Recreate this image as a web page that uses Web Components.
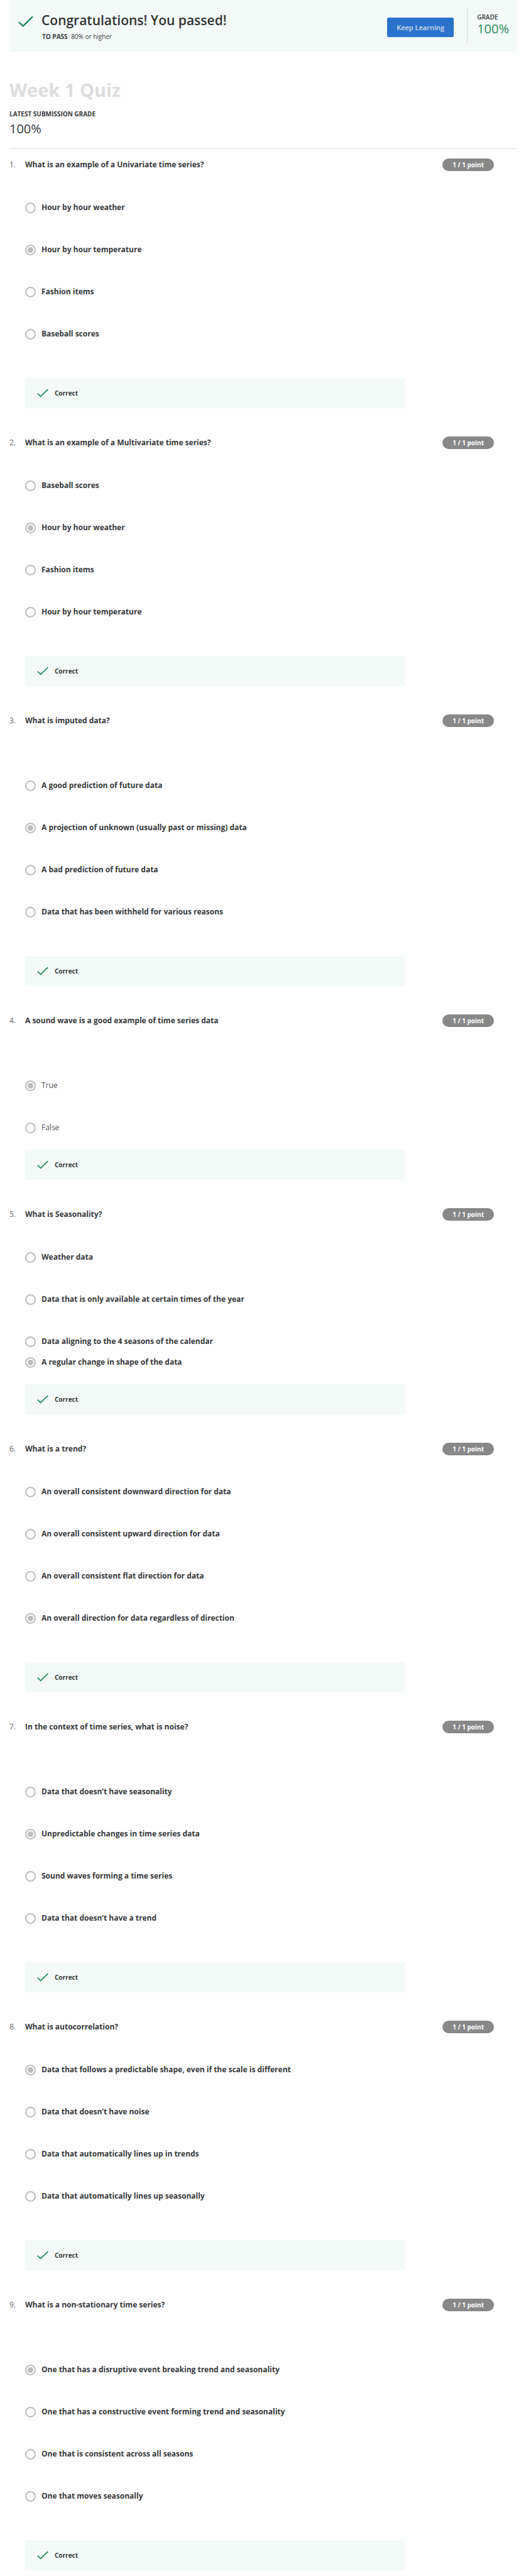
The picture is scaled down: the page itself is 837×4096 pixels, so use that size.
<!DOCTYPE html>
<html lang="en">
<head>
<meta charset="utf-8">
<meta name="viewport" content="width=device-width, initial-scale=1">
<title>Week 1 Quiz</title>
<style>
  body { margin: 0; background: #fefefe; color: #373a3c; font-family: "Open Sans", "Noto Sans", sans-serif; font-size: 12px; line-height: 16px; }
</style>
</head>
<body>
<quiz-page>
  <pass-banner slot="banner" grade="100%">
    Congratulations! You passed!
    <span slot="requirement">80% or higher</span>
    <span slot="action">Keep Learning</span>
  </pass-banner>
  <quiz-heading slot="heading" grade="100%">Week 1 Quiz</quiz-heading>

  <quiz-question number="1">
    <span slot="prompt">What is an example of a Univariate time series?</span>
    <quiz-option>Hour by hour weather</quiz-option>
    <quiz-option checked>Hour by hour temperature</quiz-option>
    <quiz-option>Fashion items</quiz-option>
    <quiz-option>Baseball scores</quiz-option>
  </quiz-question>

  <quiz-question number="2">
    <span slot="prompt">What is an example of a Multivariate time series?</span>
    <quiz-option>Baseball scores</quiz-option>
    <quiz-option checked>Hour by hour weather</quiz-option>
    <quiz-option>Fashion items</quiz-option>
    <quiz-option>Hour by hour temperature</quiz-option>
  </quiz-question>

  <quiz-question number="3" spaced>
    <span slot="prompt">What is imputed data?</span>
    <quiz-option>A good prediction of future data</quiz-option>
    <quiz-option checked>A projection of unknown (usually past or missing) data</quiz-option>
    <quiz-option>A bad prediction of future data</quiz-option>
    <quiz-option>Data that has been withheld for various reasons</quiz-option>
  </quiz-question>

  <quiz-question number="4" spaced>
    <span slot="prompt">A sound wave is a good example of time series data</span>
    <quiz-option plain checked>True</quiz-option>
    <quiz-option plain after="none">False</quiz-option>
  </quiz-question>

  <quiz-question number="5">
    <span slot="prompt">What is Seasonality?</span>
    <quiz-option>Weather data</quiz-option>
    <quiz-option>Data that is only available at certain times of the year</quiz-option>
    <quiz-option after="tight">Data aligning to the 4 seasons of the calendar</quiz-option>
    <quiz-option after="none" checked>A regular change in shape of the data</quiz-option>
  </quiz-question>

  <quiz-question number="6">
    <span slot="prompt">What is a trend?</span>
    <quiz-option>An overall consistent downward direction for data</quiz-option>
    <quiz-option>An overall consistent upward direction for data</quiz-option>
    <quiz-option>An overall consistent flat direction for data</quiz-option>
    <quiz-option checked>An overall direction for data regardless of direction</quiz-option>
  </quiz-question>

  <quiz-question number="7" spaced>
    <span slot="prompt">In the context of time series, what is noise?</span>
    <quiz-option>Data that doesn’t have seasonality</quiz-option>
    <quiz-option checked>Unpredictable changes in time series data</quiz-option>
    <quiz-option>Sound waves forming a time series</quiz-option>
    <quiz-option>Data that doesn’t have a trend</quiz-option>
  </quiz-question>

  <quiz-question number="8">
    <span slot="prompt">What is autocorrelation?</span>
    <quiz-option checked>Data that follows a predictable shape, even if the scale is different</quiz-option>
    <quiz-option>Data that doesn’t have noise</quiz-option>
    <quiz-option>Data that automatically lines up in trends</quiz-option>
    <quiz-option>Data that automatically lines up seasonally</quiz-option>
  </quiz-question>

  <quiz-question number="9" spaced last>
    <span slot="prompt">What is a non-stationary time series?</span>
    <quiz-option checked>One that has a disruptive event breaking trend and seasonality</quiz-option>
    <quiz-option>One that has a constructive event forming trend and seasonality</quiz-option>
    <quiz-option>One that is consistent across all seasons</quiz-option>
    <quiz-option>One that moves seasonally</quiz-option>
  </quiz-question>
</quiz-page>

<script>
  class Component extends HTMLElement {
    connectedCallback() {
      if (this.shadowRoot) return;
      this.attachShadow({ mode: "open" }).innerHTML = this.render();
    }
  }

  customElements.define("check-icon", class extends Component {
    render() {
      return `
        <style>
          :host { display: block; flex: none; width: 18px; }
          svg { display: block; width: 100%; height: auto; }
        </style>
        <svg viewBox="0 0 24 18" aria-hidden="true">
          <path d="M1 10.2 7.7 16.4 23 1.4" fill="none" stroke="#1d8553" stroke-width="2.2"/>
        </svg>`;
    }
  });

  customElements.define("quiz-page", class extends Component {
    render() {
      return `
        <style>
          :host { display: block; padding: 0 15px 9px; }
          .questions { border-top: 1px solid #dedede; padding-top: 9px; }
        </style>
        <slot name="banner"></slot>
        <main>
          <slot name="heading"></slot>
          <div class="questions"><slot></slot></div>
        </main>`;
    }
  });

  customElements.define("pass-banner", class extends Component {
    render() {
      return `
        <style>
          :host { display: flex; align-items: flex-start; box-sizing: border-box; min-height: 83px; padding: 12px 12px 12px 14px; background: #f3faf8; }
          check-icon { width: 24px; margin: 13px 13px 0 0; }
          .text { flex: 1; padding-top: 6px; }
          h1 { margin: 0; font-size: 21px; line-height: 28px; font-weight: 600; color: #333; }
          p { margin: 4px 0 0 1px; font-size: 10px; line-height: 16px; }
          p b { font-weight: 700; }
          p span { margin-left: 3px; }
          button { height: 31px; padding: 0 15px; margin: 16px 21px 0 0; border: 0; border-radius: 2px; background: #2a73cc; color: #d9dde4; font: 600 11px/16px "Open Sans", sans-serif; }
          .grade { border-left: 1px solid #dcdfde; padding: 8px 0 0 15px; min-height: 51px; font-size: 10px; line-height: 14px; }
          .grade b { display: block; font-weight: 600; }
          .grade strong { display: block; font-size: 20px; line-height: 24px; font-weight: 400; color: #2a8a5d; }
        </style>
        <check-icon></check-icon>
        <div class="text">
          <h1><slot></slot></h1>
          <p><b>TO PASS</b> <span><slot name="requirement"></slot></span></p>
        </div>
        <button type="button"><slot name="action"></slot></button>
        <div class="grade"><b>GRADE</b><strong>${this.getAttribute("grade")}</strong></div>`;
    }
  });

  customElements.define("quiz-heading", class extends Component {
    render() {
      return `
        <style>
          :host { display: block; padding: 40px 0 19px; }
          h2 { margin: 0; font-size: 29px; line-height: 40px; font-weight: 700; color: #ddd; }
          .label { margin-top: 10px; font-size: 10px; line-height: 16px; font-weight: 700; }
          .value { margin-top: 4px; font-size: 20px; line-height: 24px; font-weight: 400; }
        </style>
        <h2><slot></slot></h2>
        <div class="label">LATEST SUBMISSION GRADE</div>
        <div class="value">${this.getAttribute("grade")}</div>`;
    }
  });

  customElements.define("points-badge", class extends Component {
    render() {
      return `
        <style>
          :host { display: block; flex: none; padding: 0 16px; border-radius: 10px; background: #888; color: #fff; font-size: 10px; line-height: 20px; font-weight: 700; }
        </style>
        <slot></slot>`;
    }
  });

  customElements.define("quiz-feedback", class extends Component {
    render() {
      return `
        <style>
          :host { display: flex; align-items: center; gap: 10px; box-sizing: border-box; width: 77.2%; height: 48px; padding: 0 19px; background: #f3faf8; font-size: 10px; font-weight: 700; }
        </style>
        <check-icon></check-icon>
        <slot></slot>`;
    }
  });

  customElements.define("quiz-option", class extends Component {
    render() {
      return `
        <style>
          :host { display: block; padding-bottom: 35px; font-weight: 700; }
          :host([after="tight"]) { padding-bottom: 1px; }
          :host([after="none"]) { padding-bottom: 0; }
          :host([plain]) { font-weight: 400; color: #555; }
          label { display: flex; align-items: center; gap: 9px; min-height: 32px; }
          input { appearance: none; flex: none; display: grid; place-items: center; box-sizing: border-box; width: 17px; height: 17px; margin: 0; border: 2px solid #bdbdbd; border-radius: 50%; }
          input:checked::before { content: ""; width: 9px; height: 9px; border-radius: 50%; background: #bdbdbd; }
        </style>
        <label>
          <input type="radio" disabled ${this.hasAttribute("checked") ? "checked" : ""}>
          <span><slot></slot></span>
        </label>`;
    }
  });

  customElements.define("quiz-question", class extends Component {
    render() {
      return `
        <style>
          :host { display: grid; grid-template-columns: 25px 1fr; padding-bottom: 39px; }
          :host([last]) { padding-bottom: 0; }
          .number { line-height: 32px; color: #666; }
          .title { display: flex; align-items: center; justify-content: space-between; min-height: 32px; padding-right: 36px; }
          h3 { margin: 0; font-size: 12px; line-height: 16px; font-weight: 700; }
          .options { padding: 36px 0 19px; }
          :host([spaced]) .options { padding-top: 71px; }
        </style>
        <span class="number">${this.getAttribute("number")}.</span>
        <section>
          <div class="title">
            <h3><slot name="prompt"></slot></h3>
            <points-badge>1 / 1 point</points-badge>
          </div>
          <div class="options" role="radiogroup"><slot></slot></div>
          <quiz-feedback>Correct</quiz-feedback>
        </section>`;
    }
  });
</script>
</body>
</html>
